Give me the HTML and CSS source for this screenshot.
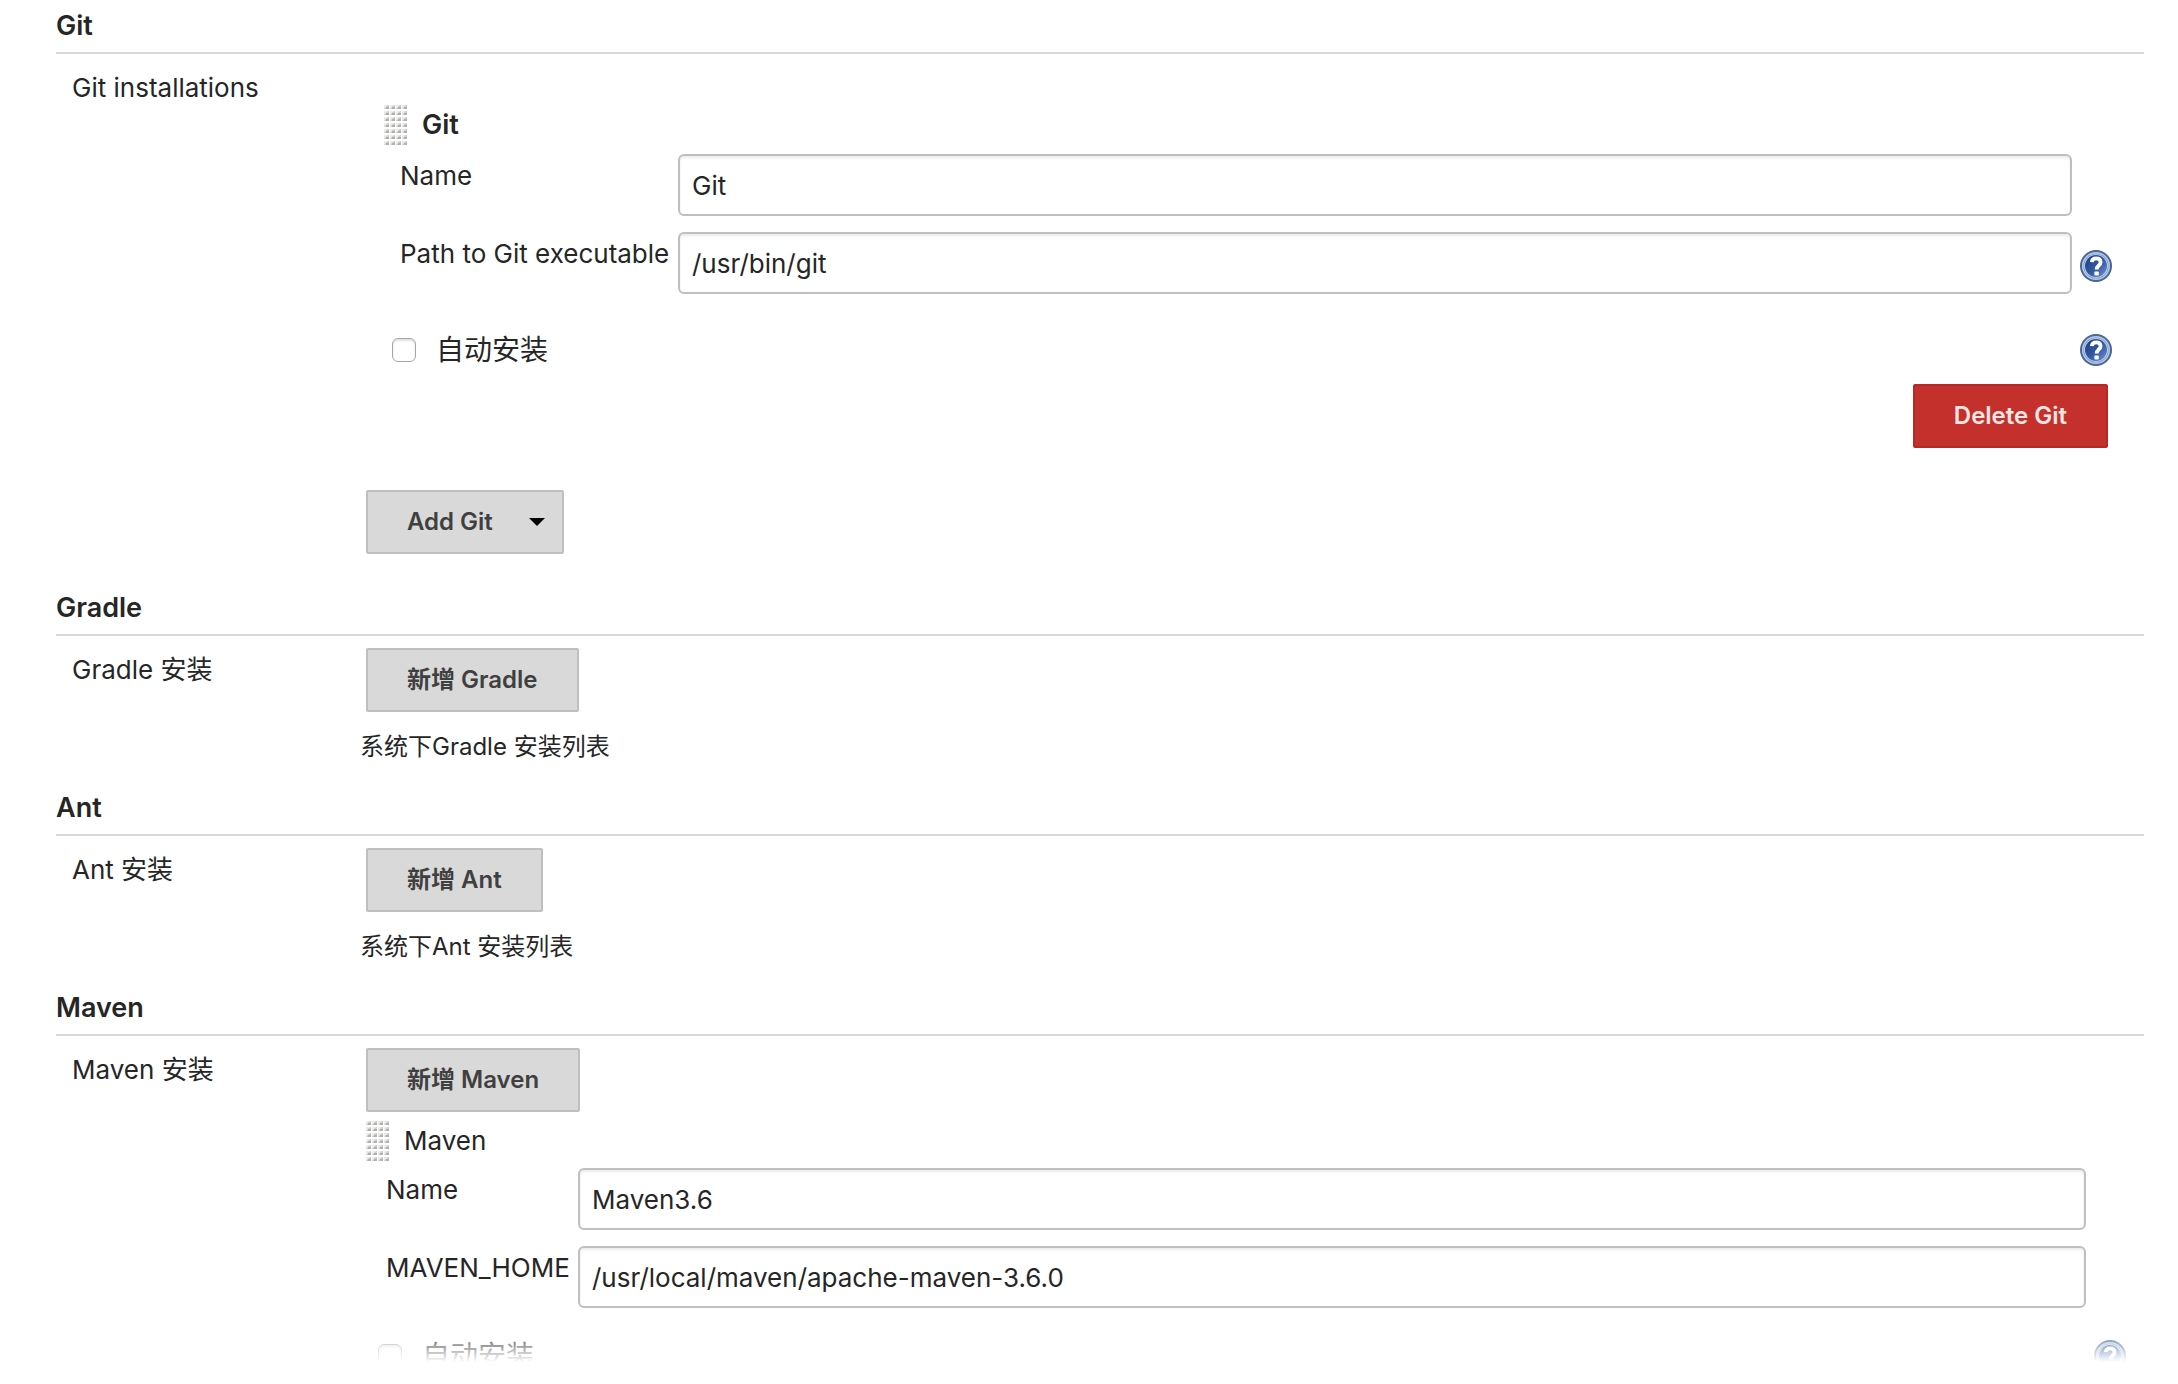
FILE: index.html
```
<!DOCTYPE html>
<html lang="zh-CN">
<head>
  <meta charset="UTF-8">
  <meta name="viewport" content="width=device-width, initial-scale=1">
  <title>Global Tool Configuration</title>
  <link rel="stylesheet" href="styles.css">
</head>
<body>

  <!-- shared icons -->
  <svg class="sprite" aria-hidden="true">
    <defs>
      <linearGradient id="help-fill" x1="0" y1="0" x2="1" y2="1">
        <stop offset="0" stop-color="#1f3f86"/>
        <stop offset="0.5" stop-color="#3156a0"/>
        <stop offset="1" stop-color="#6f92cb"/>
      </linearGradient>
      <pattern id="grip-dots" width="6" height="6" patternUnits="userSpaceOnUse">
        <rect x="0" y="1" width="5" height="4" fill="#ececea"/>
        <path d="M0 5 L4 1 H5 V5 Z" fill="#cbcbc9"/>
        <rect x="2" y="3" width="3" height="2" fill="#b0b0ae"/>
      </pattern>
    </defs>
    <symbol id="icon-help" viewBox="0 0 32 32">
      <circle cx="16" cy="16" r="16" fill="#4a6597"/>
      <circle cx="16" cy="16" r="14" fill="#b4cae6"/>
      <circle cx="16" cy="16" r="12.6" fill="#7d9ac8"/>
      <circle cx="16" cy="16" r="11.8" fill="#c9dbf0"/>
      <circle cx="16" cy="16" r="11" fill="url(#help-fill)"/>
      <path d="M11.8 12.2 C12 9.3 14 8.4 16.2 8.4 C18.8 8.4 20.6 9.8 20.6 12.2 C20.6 15.4 16.6 15.6 16.6 19.6" fill="none" stroke="#fff" stroke-width="3.8"/>
      <rect x="14.4" y="21.6" width="4.4" height="4" rx="1" fill="#fff"/>
    </symbol>
    <symbol id="icon-grip" viewBox="0 0 24 42">
      <rect width="24" height="42" fill="url(#grip-dots)"/>
    </symbol>
  </svg>

  <form class="config">

    <section class="section">
      <h2 class="section-head">Git</h2>
      <div class="row">
        <div class="row-label">Git installations</div>
        <div class="row-body">
          <div class="tool tool-git">
            <div class="tool-head">
              <svg class="grip"><use href="#icon-grip"/></svg>
              <b>Git</b>
            </div>
            <div class="fields">
              <label for="git-name">Name</label>
              <input class="text" type="text" id="git-name" value="Git">
              <label for="git-path">Path to Git executable</label>
              <input class="text" type="text" id="git-path" value="/usr/bin/git">
              <button class="help" type="button" aria-label="Help for Path to Git executable"><svg><use href="#icon-help"/></svg></button>
            </div>
            <div class="auto">
              <input class="check" type="checkbox" id="git-auto">
              <label for="git-auto">自动安装</label>
              <button class="help" type="button" aria-label="Help for 自动安装"><svg><use href="#icon-help"/></svg></button>
            </div>
            <div class="tool-actions">
              <button class="btn btn-danger" type="button">Delete Git</button>
            </div>
          </div>
          <button class="btn btn-menu" type="button">Add Git</button>
        </div>
      </div>
    </section>

    <section class="section">
      <h2 class="section-head">Gradle</h2>
      <div class="row">
        <div class="row-label">Gradle 安装</div>
        <div class="row-body">
          <button class="btn" type="button">新增 Gradle</button>
          <p class="note">系统下Gradle 安装列表</p>
        </div>
      </div>
    </section>

    <section class="section">
      <h2 class="section-head">Ant</h2>
      <div class="row">
        <div class="row-label">Ant 安装</div>
        <div class="row-body">
          <button class="btn" type="button">新增 Ant</button>
          <p class="note">系统下Ant 安装列表</p>
        </div>
      </div>
    </section>

    <section class="section">
      <h2 class="section-head">Maven</h2>
      <div class="row row-last">
        <div class="row-label">Maven 安装</div>
        <div class="row-body">
          <button class="btn" type="button">新增 Maven</button>
          <div class="tool tool-maven">
            <div class="tool-head">
              <svg class="grip"><use href="#icon-grip"/></svg>
              <span>Maven</span>
            </div>
            <div class="fields">
              <label for="maven-name">Name</label>
              <input class="text" type="text" id="maven-name" value="Maven3.6">
              <label for="maven-home">MAVEN_HOME</label>
              <input class="text" type="text" id="maven-home" value="/usr/local/maven/apache-maven-3.6.0">
            </div>
            <div class="auto">
              <input class="check" type="checkbox" id="maven-auto">
              <label for="maven-auto">自动安装</label>
              <button class="help" type="button" aria-label="Help for 自动安装"><svg><use href="#icon-help"/></svg></button>
            </div>
          </div>
        </div>
      </div>
    </section>

  </form>

  <div class="fade"></div>

</body>
</html>
```
FILE: styles.css
```
* {
  box-sizing: border-box;
}

body {
  margin: 0;
  background: #fff;
  color: #262626;
  font-family: Inter, "Noto Sans CJK SC", sans-serif;
  font-size: 26px;
  line-height: 36px;
}

.sprite {
  position: absolute;
  width: 0;
  height: 0;
}

.config {
  padding: 8px 34px 0 56px;
}

.section-head {
  margin: 0;
  padding-bottom: 8px;
  border-bottom: 2px solid #d9d9d9;
  font-size: 27px;
  font-weight: 600;
  line-height: 36px;
}

.row {
  display: grid;
  grid-template-columns: 304px 1fr;
  padding: 12px 0 30px;
}

.row-last {
  padding-bottom: 0;
}

.row-label {
  padding: 4px 0 0 16px;
}

.btn {
  display: block;
  height: 64px;
  margin: 0 6px 6px;
  padding: 0 39px;
  border: 2px solid #bfbfbf;
  border-radius: 2px;
  background: #d9d9d9;
  color: #404040;
  font-family: inherit;
  font-size: 24px;
  font-weight: 600;
  line-height: 32px;
}

.btn-menu {
  display: flex;
  align-items: center;
  gap: 36px;
  padding-right: 17px;
}

.btn-menu::after {
  content: "";
  border: 8px solid transparent;
  border-top-color: #000;
  border-bottom: 0;
}

.btn-danger {
  border-color: #b52a26;
  background: #c4302b;
  color: #fbe6e4;
}

.note {
  margin: 22px 0 0;
  font-size: 24px;
  line-height: 26px;
}

/* one installed tool */
.tool-git {
  --label: 278px;
  --gap: 40px;
  padding: 38px 32px 36px 24px;
}

.tool-maven {
  --label: 192px;
  --gap: 32px;
  padding: 2px 18px 0 6px;
}

.tool-head {
  display: flex;
  align-items: center;
  gap: 14px;
  height: 42px;
  margin-bottom: 6px;
}

.tool-git .tool-head {
  margin-bottom: 8px;
}

.tool-head b {
  font-size: 27px;
  font-weight: 600;
}

.grip {
  width: 24px;
  height: 42px;
}

.fields {
  display: grid;
  grid-template-columns: var(--label) 1fr 40px;
  row-gap: 16px;
  padding-left: 16px;
}

.tool-maven .fields {
  padding-left: 20px;
}

.fields label {
  grid-column: 1;
  padding-top: 4px;
  white-space: nowrap;
}

.text {
  width: 100%;
  height: 62px;
  padding: 0 12px;
  border: 2px solid #bfbfbf;
  border-radius: 6px;
  background: #fff;
  box-shadow: inset 0 2px 3px rgba(0, 0, 0, 0.08);
  color: #262626;
  font-family: inherit;
  font-size: 26px;
}

.help {
  width: 32px;
  height: 32px;
  padding: 0;
  border: 0;
  background: none;
}

.help svg {
  display: block;
  width: 32px;
  height: 32px;
}

.fields .help {
  margin: 18px 0 0 8px;
}

.auto {
  display: flex;
  align-items: center;
  height: 32px;
  margin-top: var(--gap);
  padding-left: 8px;
  font-size: 28px;
}

.tool-maven .auto {
  padding-left: 12px;
}

.auto .help {
  margin-left: auto;
}

.check {
  appearance: none;
  width: 24px;
  height: 24px;
  margin: 0 20px 0 0;
  border: 1px solid #a6a6a6;
  border-radius: 6px;
  background: #fff;
  box-shadow: inset 0 2px 2px rgba(0, 0, 0, 0.12);
}

.tool-actions {
  display: flex;
  justify-content: flex-end;
  padding-top: 18px;
}

.tool-actions .btn {
  margin-right: 4px;
}

/* bottom of the page fades out to white */
.fade {
  position: fixed;
  right: 0;
  bottom: 0;
  left: 0;
  height: 58px;
  background: linear-gradient(rgba(255, 255, 255, 0), #fff 36px);
  pointer-events: none;
}
```
